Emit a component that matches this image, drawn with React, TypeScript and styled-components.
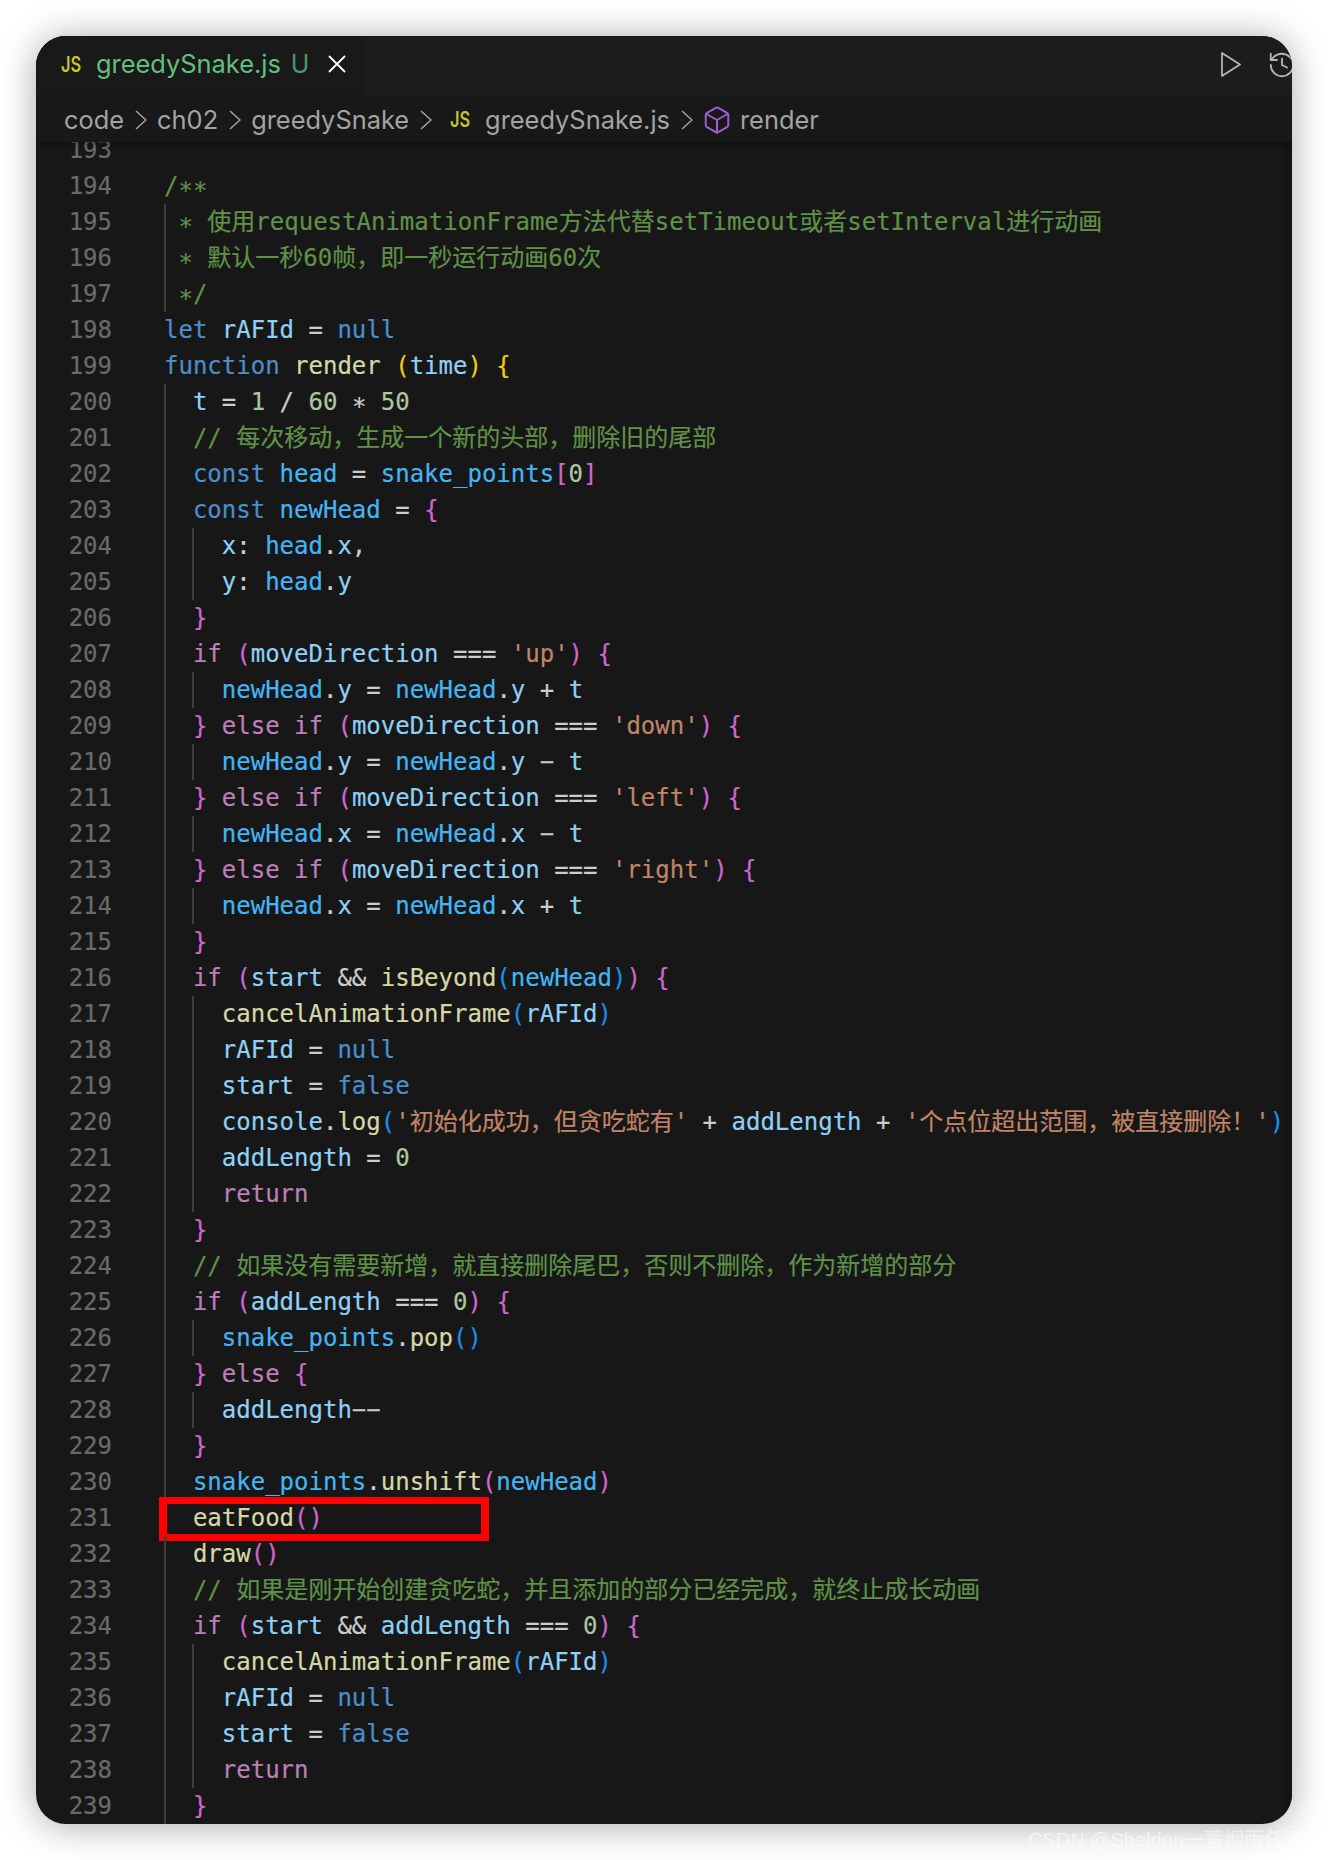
import React from "react";
import styled, { createGlobalStyle } from "styled-components";
import { Box, History } from "lucide-react";

const CODE_FONT = `"DejaVu Sans Mono", "Noto Sans CJK SC", monospace`;
const UI_FONT = `Inter, "Liberation Sans", sans-serif`;

const colors: Record<string, string> = {
  c: "#5f9148",
  k: "#bc7fb8",
  w: "#4a8fcc",
  v: "#8fd0f5",
  h: "#45b5f2",
  f: "#d6d6a6",
  s: "#c08468",
  n: "#adc6a0",
  o: "#cccccc",
  g: "#f0cc10",
  p: "#d066cf",
  b: "#1a8ee8",
};

type Line = { depth: number; parts: string[]; marked?: boolean };

const l = (depth: number, ...parts: string[]): Line => ({ depth, parts });

const lines: Line[] = [
  l(0),
  l(0, "c/∗∗"),
  l(1, "c ∗ 使用requestAnimationFrame方法代替setTimeout或者setInterval进行动画"),
  l(1, "c ∗ 默认一秒60帧，即一秒运行动画60次"),
  l(1, "c ∗/"),
  l(0, "wlet", "o ", "vrAFId", "o = ", "wnull"),
  l(0, "wfunction", "o ", "frender", "o ", "g(", "vtime", "g)", "o ", "g{"),
  l(1, "o  ", "vt", "o = ", "n1", "o / ", "n60", "o ∗ ", "n50"),
  l(1, "c  // 每次移动，生成一个新的头部，删除旧的尾部"),
  l(1, "o  ", "wconst", "o ", "hhead", "o = ", "hsnake_points", "p[", "n0", "p]"),
  l(1, "o  ", "wconst", "o ", "hnewHead", "o = ", "p{"),
  l(2, "o    ", "vx", "o: ", "hhead", "o.", "vx", "o,"),
  l(2, "o    ", "vy", "o: ", "hhead", "o.", "vy"),
  l(1, "o  ", "p}"),
  l(1, "o  ", "kif", "o ", "p(", "vmoveDirection", "o === ", "s'up'", "p)", "o ", "p{"),
  l(2, "o    ", "hnewHead", "o.", "vy", "o = ", "hnewHead", "o.", "vy", "o + ", "vt"),
  l(1, "o  ", "p}", "o ", "kelse", "o ", "kif", "o ", "p(", "vmoveDirection", "o === ", "s'down'", "p)", "o ", "p{"),
  l(2, "o    ", "hnewHead", "o.", "vy", "o = ", "hnewHead", "o.", "vy", "o − ", "vt"),
  l(1, "o  ", "p}", "o ", "kelse", "o ", "kif", "o ", "p(", "vmoveDirection", "o === ", "s'left'", "p)", "o ", "p{"),
  l(2, "o    ", "hnewHead", "o.", "vx", "o = ", "hnewHead", "o.", "vx", "o − ", "vt"),
  l(1, "o  ", "p}", "o ", "kelse", "o ", "kif", "o ", "p(", "vmoveDirection", "o === ", "s'right'", "p)", "o ", "p{"),
  l(2, "o    ", "hnewHead", "o.", "vx", "o = ", "hnewHead", "o.", "vx", "o + ", "vt"),
  l(1, "o  ", "p}"),
  l(1, "o  ", "kif", "o ", "p(", "vstart", "o && ", "fisBeyond", "b(", "hnewHead", "b)", "p)", "o ", "p{"),
  l(2, "o    ", "fcancelAnimationFrame", "b(", "vrAFId", "b)"),
  l(2, "o    ", "vrAFId", "o = ", "wnull"),
  l(2, "o    ", "vstart", "o = ", "wfalse"),
  l(2, "o    ", "vconsole", "o.", "flog", "b(", "s'初始化成功，但贪吃蛇有'", "o + ", "vaddLength", "o + ", "s'个点位超出范围，被直接删除！'", "b)"),
  l(2, "o    ", "vaddLength", "o = ", "n0"),
  l(2, "o    ", "kreturn"),
  l(1, "o  ", "p}"),
  l(1, "c  // 如果没有需要新增，就直接删除尾巴，否则不删除，作为新增的部分"),
  l(1, "o  ", "kif", "o ", "p(", "vaddLength", "o === ", "n0", "p)", "o ", "p{"),
  l(2, "o    ", "hsnake_points", "o.", "fpop", "b()"),
  l(1, "o  ", "p}", "o ", "kelse", "o ", "p{"),
  l(2, "o    ", "vaddLength", "o−−"),
  l(1, "o  ", "p}"),
  l(1, "o  ", "hsnake_points", "o.", "funshift", "p(", "hnewHead", "p)"),
  { ...l(1, "o  ", "featFood", "p()"), marked: true },
  l(1, "o  ", "fdraw", "p()"),
  l(1, "c  // 如果是刚开始创建贪吃蛇，并且添加的部分已经完成，就终止成长动画"),
  l(1, "o  ", "kif", "o ", "p(", "vstart", "o && ", "vaddLength", "o === ", "n0", "p)", "o ", "p{"),
  l(2, "o    ", "fcancelAnimationFrame", "b(", "vrAFId", "b)"),
  l(2, "o    ", "vrAFId", "o = ", "wnull"),
  l(2, "o    ", "vstart", "o = ", "wfalse"),
  l(2, "o    ", "kreturn"),
  l(1, "o  ", "p}"),
];

const GlobalStyle = createGlobalStyle`
  html, body {
    margin: 0;
    padding: 0;
    background: #ffffff;
  }
`;

const Page = styled.div`
  position: relative;
  width: 1328px;
  height: 1860px;
  padding: 36px;
  box-sizing: border-box;
  overflow: hidden;
`;

const Window = styled.div`
  display: flex;
  flex-direction: column;
  height: 100%;
  border-radius: 30px;
  background: #171717;
  box-shadow: 0 2px 36px rgba(0, 0, 0, 0.34);
  overflow: hidden;
`;

const TabBar = styled.div`
  display: flex;
  align-items: stretch;
  justify-content: space-between;
  height: 61px;
  flex: none;
  background: #1c1c1c;
`;

const Tab = styled.div`
  display: flex;
  align-items: center;
  width: 329px;
  padding: 0 0 5px 25px;
  box-sizing: border-box;
  background: #191919;
`;

const JsBadge = styled.span`
  display: inline-block;
  width: 20px;
  margin-right: 15px;
  color: #c4c42e;
  font-family: ${UI_FONT};
  font-size: 21px;
  font-weight: 600;
  line-height: 1;
  transform: scaleX(0.78);
  transform-origin: left center;
  white-space: nowrap;
`;

const TabTitle = styled.span`
  color: #62c07f;
  font-family: ${UI_FONT};
  font-size: 25.4px;
  line-height: 1;
`;

const TabStatus = styled.span`
  margin-left: 10px;
  color: #4b9a68;
  font-family: ${UI_FONT};
  font-size: 25px;
  line-height: 1;
`;

const CloseIcon = styled.svg`
  width: 18px;
  height: 18px;
  margin-left: 19px;
`;

const Actions = styled.div`
  display: flex;
  align-items: center;
  gap: 25px;
  margin-right: -5px;
  padding-bottom: 4px;
  color: #b4b4b4;
`;

const Breadcrumbs = styled.div`
  display: flex;
  align-items: center;
  height: 45px;
  flex: none;
  padding-left: 28px;
  background: #181818;
  color: #a3a3a3;
  font-family: ${UI_FONT};
  font-size: 25.4px;
  box-shadow: 0 3px 5px rgba(0, 0, 0, 0.25);
  position: relative;
  z-index: 1;
`;

const Chevron = styled.svg`
  width: 12px;
  height: 20px;
  margin: 0 10px 0 11px;
`;

const CrumbBadge = styled(JsBadge)`
  margin: 0 15px 0 8px;
`;

const CubeIcon = styled(Box)`
  width: 30px;
  height: 30px;
  margin: 0 8px 0 -1px;
  color: #9d5fcb;
`;

const CodePane = styled.div`
  flex: 1;
  min-height: 0;
  border-right: 8px solid #141414;
  overflow: hidden;
  font-family: ${CODE_FONT};
  font-size: 24px;
  -webkit-text-stroke: 0.2px;
`;

const Rows = styled.div`
  margin-top: -10px;
`;

const Row = styled.div`
  position: relative;
  display: flex;
  height: 36px;
  line-height: 36px;
  white-space: pre;
`;

const LineNo = styled.span`
  width: 76px;
  margin-right: 52px;
  flex: none;
  text-align: right;
  color: #6a6a6a;
`;

const Code = styled.span<{ $depth: number }>`
  flex: 1;
  background-image: ${({ $depth }) =>
    $depth > 1
      ? "linear-gradient(#3d3d3d, #3d3d3d), linear-gradient(#3d3d3d, #3d3d3d)"
      : $depth === 1
        ? "linear-gradient(#3d3d3d, #3d3d3d)"
        : "none"};
  background-size: 2px 100%;
  background-repeat: no-repeat;
  background-position: ${({ $depth }) => ($depth > 1 ? "0 0, 28px 0" : "0 0")};
`;

const Token = styled.span<{ $kind: string }>`
  color: ${({ $kind }) => colors[$kind]};
`;

const Marker = styled.div`
  position: absolute;
  left: 123px;
  top: -3px;
  width: 330px;
  height: 44px;
  box-sizing: border-box;
  border: solid #fe0000;
  border-width: 7px 8px;
`;

const Watermark = styled.div`
  position: absolute;
  left: 1028px;
  top: 1828px;
  color: rgba(255, 255, 255, 0.55);
  font-family: "Liberation Sans", "Noto Sans CJK SC", sans-serif;
  font-size: 20px;
  line-height: 24px;
  white-space: nowrap;
`;

const ChevronRight = () => (
  <Chevron viewBox="0 0 12 20" fill="none" stroke="#a3a3a3" strokeWidth="1.5">
    <polyline points="1,1 11,10 1,19" />
  </Chevron>
);

export default function App() {
  return (
    <Page>
      <GlobalStyle />
      <Window>
        <TabBar>
          <Tab>
            <JsBadge>JS</JsBadge>
            <TabTitle>greedySnake.js</TabTitle>
            <TabStatus>U</TabStatus>
            <CloseIcon viewBox="0 0 18 18" fill="none" stroke="#ffffff" strokeWidth="1.8">
              <path d="M1 1l16 16M17 1L1 17" />
            </CloseIcon>
          </Tab>
          <Actions>
            <svg width="22" height="27" viewBox="0 0 22 27" fill="none" stroke="currentColor" strokeWidth="1.8">
              <polygon points="2,2 20,13.5 2,25" strokeLinejoin="round" />
            </svg>
            <History size={30} strokeWidth={1.5} />
          </Actions>
        </TabBar>
        <Breadcrumbs>
          code
          <ChevronRight />
          ch02
          <ChevronRight />
          greedySnake
          <ChevronRight />
          <CrumbBadge>JS</CrumbBadge>
          greedySnake.js
          <ChevronRight />
          <CubeIcon strokeWidth={1.6} />
          render
        </Breadcrumbs>
        <CodePane>
          <Rows>
            {lines.map((line, i) => (
              <Row key={i}>
                <LineNo>{193 + i}</LineNo>
                <Code $depth={line.depth}>
                  {line.parts.map((part, j) => (
                    <Token key={j} $kind={part[0]}>
                      {part.slice(1)}
                    </Token>
                  ))}
                </Code>
                {line.marked && <Marker />}
              </Row>
            ))}
          </Rows>
        </CodePane>
      </Window>
      <Watermark>CSDN @Sheldon一蓑烟雨任平生</Watermark>
    </Page>
  );
}
